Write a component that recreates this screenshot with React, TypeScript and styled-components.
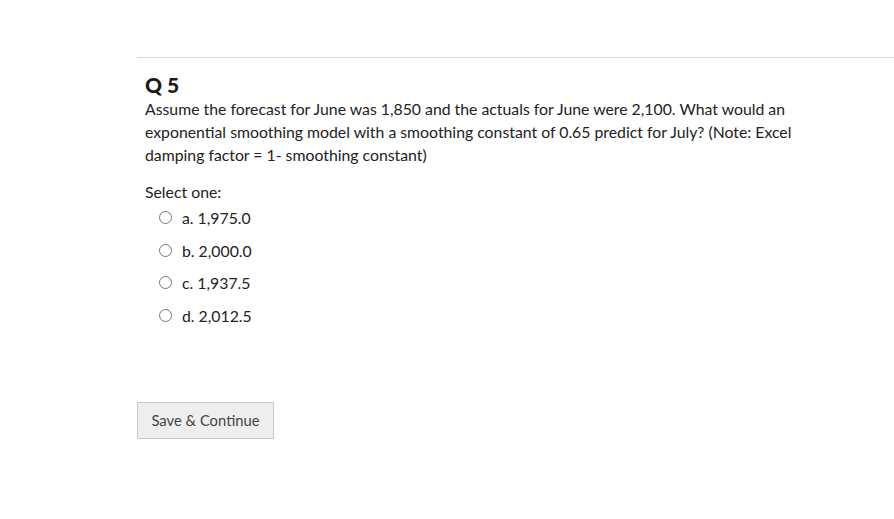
import styled, { createGlobalStyle } from "styled-components";

const GlobalStyle = createGlobalStyle`
  body {
    margin: 0;
    background: #fff;
    font-family: Lato, "Open Sans", Arial, sans-serif;
    color: #222;
  }
`;

const Page = styled.div`
  padding: 57px 0 0 137px;
`;

const Divider = styled.hr`
  margin: 0;
  border: none;
  border-top: 1px solid #d8d8d8;
`;

const Question = styled.section`
  padding: 15px 0 0 8px;
  width: 670px;
`;

const Title = styled.h2`
  margin: 0;
  font-size: 21px;
  font-weight: 900;
  line-height: 24px;
  color: #1a1a1a;
`;

const Prompt = styled.p`
  margin: 0;
  font-size: 15.8px;
  line-height: 23px;
`;

const Select = styled.div`
  margin-top: 14px;
  font-size: 15.8px;
  line-height: 23px;
`;

const Options = styled.div`
  display: flex;
  flex-direction: column;
  gap: 9.5px;
  margin-top: 3px;
  padding-left: 14px;
`;

const Option = styled.label`
  display: flex;
  align-items: center;
  gap: 10px;
  font-size: 15.8px;
  line-height: 23px;
`;

const Radio = styled.span`
  width: 11px;
  height: 11px;
  border: 1px solid #777;
  border-radius: 50%;
  background: #fff;
`;

const Button = styled.button`
  margin-top: 75px;
  width: 137px;
  height: 37px;
  background: #eeeeee;
  border: 1px solid #c8c8c8;
  border-radius: 1px;
  font-family: inherit;
  font-size: 14.8px;
  color: #444;
  padding: 0;
`;

const options = ["a. 1,975.0", "b. 2,000.0", "c. 1,937.5", "d. 2,012.5"];

export default function App() {
  return (
    <>
      <GlobalStyle />
      <Page>
        <Divider />
        <Question>
          <Title>Q 5</Title>
          <Prompt>
            Assume the forecast for June was 1,850 and the actuals for June were 2,100. What would an
            exponential smoothing model with a smoothing constant of 0.65 predict for July? (Note: Excel
            damping factor = 1- smoothing constant)
          </Prompt>
          <Select>Select one:</Select>
          <Options>
            {options.map((o) => (
              <Option key={o}>
                <Radio />
                {o}
              </Option>
            ))}
          </Options>
        </Question>
        <Button>Save &amp; Continue</Button>
      </Page>
    </>
  );
}
